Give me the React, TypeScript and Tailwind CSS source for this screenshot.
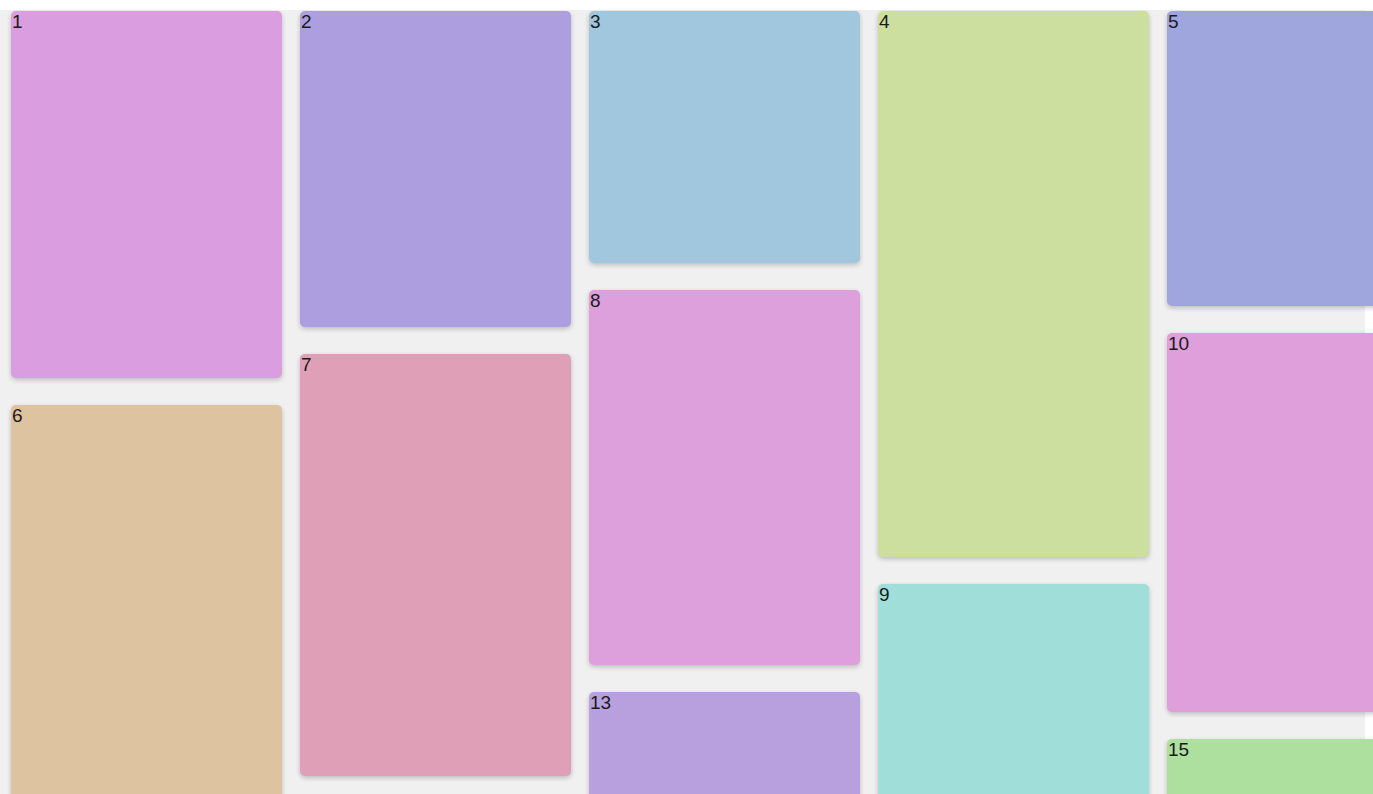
const columns = [
  [
    { n: 1, h: 367, c: 'bg-[#da9ee0]' },
    { n: 6, h: 420, c: 'bg-[#dec3a0]' },
  ],
  [
    { n: 2, h: 316, c: 'bg-[#ad9fdf]' },
    { n: 7, h: 422, c: 'bg-[#dfa0b7]' },
  ],
  [
    { n: 3, h: 252, c: 'bg-[#a0c7dd]' },
    { n: 8, h: 375, c: 'bg-[#de9fdd]' },
    { n: 13, h: 300, c: 'bg-[#b8a0de]' },
  ],
  [
    { n: 4, h: 546, c: 'bg-[#cddf9f]' },
    { n: 9, h: 300, c: 'bg-[#a0ded9]' },
  ],
  [
    { n: 5, h: 295, c: 'bg-[#9fa6dd]' },
    { n: 10, h: 379, c: 'bg-[#df9fdb]' },
    { n: 15, h: 300, c: 'bg-[#addf9e]' },
  ],
];

export default function App() {
  return (
    <div className="min-h-screen bg-white pt-[10px]" style={{ fontFamily: '"Liberation Sans", Arial, sans-serif' }}>
      <div className="w-[1365px] bg-[#f0f0f0] pl-[11px] pt-[1px]">
        <div className="flex gap-[18px]">
          {columns.map((col, i) => (
            <div key={i} className="flex w-[271px] shrink-0 flex-col gap-[27px]">
              {col.map((card) => (
                <div
                  key={card.n}
                  className={`${card.c} rounded-[5px] pl-[1px] text-[19px] leading-[22px] text-[#1a1a1a] shadow-[0_2px_5px_rgba(0,0,0,0.22)]`}
                  style={{ height: card.h }}
                >
                  {card.n}
                </div>
              ))}
            </div>
          ))}
        </div>
      </div>
    </div>
  );
}
